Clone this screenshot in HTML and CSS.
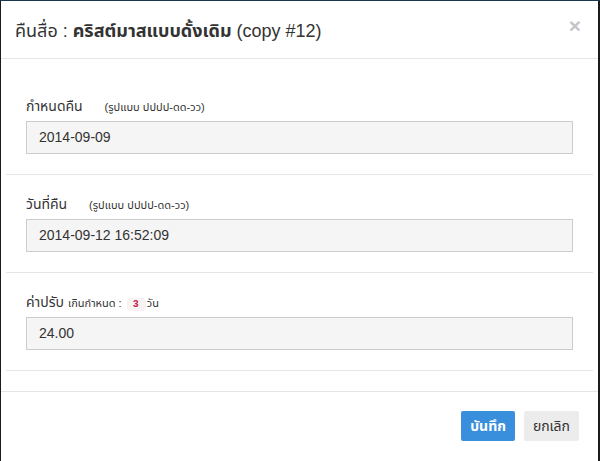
FILE: index.html
```html
<!DOCTYPE html>
<html lang="th">
<head>
<meta charset="utf-8">
<title>คืนสื่อ</title>
<link rel="stylesheet" href="styles.css">
</head>
<body>
<div class="backdrop-top"></div>
<div class="modal">
  <div class="modal-header">
    <h4 class="modal-title">คืนสื่อ : <b>คริสต์มาสแบบดั้งเดิม</b> (copy #12)</h4>
    <button class="close" type="button">×</button>
  </div>
  <div class="modal-body">
    <div class="section">
      <label class="label">กำหนดคืน <small class="hint">(รูปแบบ ปปปป-ดด-วว)</small></label>
      <div class="input">2014-09-09</div>
    </div>
    <div class="section">
      <label class="label">วันที่คืน <small class="hint">(รูปแบบ ปปปป-ดด-วว)</small></label>
      <div class="input">2014-09-12 16:52:09</div>
    </div>
    <div class="section">
      <label class="label">ค่าปรับ <small class="small">เกินกำหนด : <code class="code">3</code>วัน</small></label>
      <div class="input">24.00</div>
    </div>
  </div>
  <div class="modal-footer">
    <button class="btn btn-primary" type="button">บันทึก</button>
    <button class="btn btn-default" type="button">ยกเลิก</button>
  </div>
</div>
</body>
</html>
```

FILE: styles.css
```css
html, body {
  margin: 0;
  padding: 0;
  height: 100%;
  overflow: hidden;
}
body {
  background: #1b1b1b;
  font-family: "Liberation Sans", "Noto Sans Thai", Arial, sans-serif;
  color: #333;
}
.backdrop-top {
  height: 1px;
  background: #1c3550;
}
.modal {
  margin-left: 1px;
  width: 597px;
  background: #fff;
  height: 470px;
}
.modal-header {
  display: flex;
  align-items: flex-start;
  justify-content: space-between;
  height: 58px;
  box-sizing: border-box;
  padding: 17px 15px 0 14px;
  border-bottom: 1px solid #e5e5e5;
}
.modal-title {
  margin: 0;
  font-size: 18px;
  font-weight: normal;
  line-height: 26px;
  height: 26px;
  color: #333;
}
.modal-title b {
  font-weight: bold;
}
.close {
  border: 0;
  background: none;
  padding: 0;
  margin: -3px 2px 0 0;
  font-family: "Liberation Sans", Arial, sans-serif;
  font-size: 21px;
  font-weight: bold;
  line-height: 21px;
  color: #c6c6c6;
}
.modal-body {
  padding: 18px 5px 20px 5px;
}
.section {
  padding: 19px 20px 20px 20px;
  border-bottom: 1px solid #e5e5e5;
}
.label {
  display: block;
  height: 20px;
  font-size: 14px;
  line-height: 20px;
  margin-bottom: 5px;
  color: #333;
}
.hint {
  font-size: 11px;
  margin-left: 18px;
}
.small {
  font-size: 11px;
}
.code {
  font-family: "Liberation Mono", monospace;
  font-size: 10px;
  font-weight: bold;
  line-height: 14px;
  color: #c7254e;
  background: #f9f2f4;
  border-radius: 4px;
  padding: 1px 7px 1px 6px;
  margin-left: 2px;
  margin-right: 1px;
}
.input {
  height: 33px;
  box-sizing: border-box;
  border: 1px solid #ccc;
  background: #f5f5f5;
  padding: 0 12px;
  font-size: 14px;
  line-height: 31px;
  color: #333;
}
.modal-footer {
  border-top: 1px solid #e5e5e5;
  padding: 19px 19px 20px;
  display: flex;
  justify-content: flex-end;
  gap: 9px;
}
.btn {
  height: 30px;
  border: 0;
  border-radius: 2px;
  font-family: "Liberation Sans", "Noto Sans Thai", Arial, sans-serif;
  font-size: 14px;
  line-height: 30px;
  padding: 0 9px;
}
.btn-primary {
  background: #3a8fdd;
  color: #fff;
  font-weight: bold;
}
.btn-default {
  background: #ececec;
  color: #333;
}
```
